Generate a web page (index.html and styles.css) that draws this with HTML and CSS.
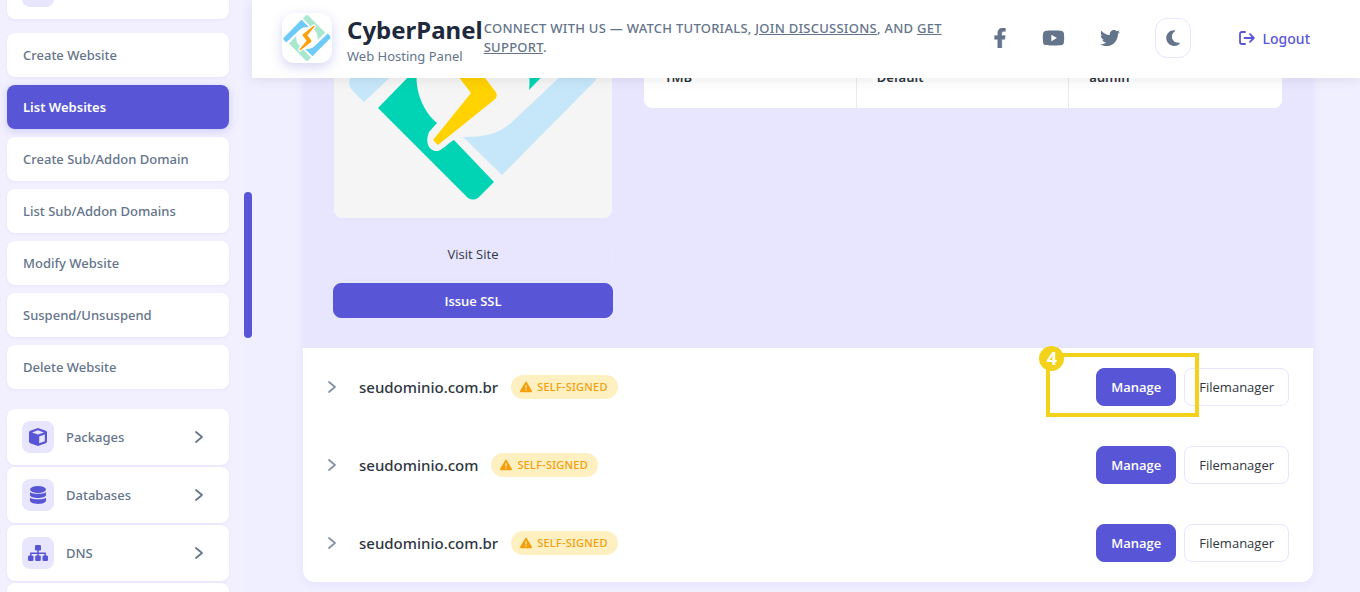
FILE: index.html
```html
<!DOCTYPE html>
<html lang="en">
<head>
    <meta charset="UTF-8">
    <meta name="viewport" content="width=device-width, initial-scale=1.0">
    <title>List Websites - CyberPanel</title>
    <link rel="stylesheet" href="styles.css">
</head>
<body>
    <svg class="sprite" aria-hidden="true">
        <symbol id="logo" viewBox="13 13 252 252">
            <g id="logo-half">
                <path class="logo-green" d="M44 168L83 128C80 152 90 172 103 183L95 192C90 205 97 212 104 211C110 209 114 203 120 200L160 242L144 258Q139 261 134 258Z"/>
                <path class="logo-blue" d="M248 116L260 128Q266 136 260 142L168 235L129 197C152 197 165 194 178 182Z"/>
            </g>
            <use href="#logo-half" transform="rotate(180 139 139)"/>
            <path class="logo-bolt" d="M175 73L180 78L141 125L161 151Q165 156 160 160L104 205L99 200L137 153L117 127Q113 122 119 118Z"/>
        </symbol>
        <symbol id="chevron" viewBox="0 0 10 14">
            <path d="M2 2l6 5-6 5" fill="none" stroke="currentColor" stroke-width="1.700" stroke-linecap="round" stroke-linejoin="round"/>
        </symbol>
        <symbol id="warning" viewBox="0 0 512 512">
            <path fill="currentColor" d="M256 32c14.2 0 27.3 7.5 34.5 19.8l216 368c7.3 12.4 7.3 27.7 .2 40.1S486.3 480 472 480H40c-14.3 0-27.6-7.7-34.7-20.1s-7-27.8 .2-40.1l216-368C228.7 39.5 241.8 32 256 32zm0 128c-13.3 0-24 10.7-24 24V296c0 13.3 10.7 24 24 24s24-10.7 24-24V184c0-13.3-10.7-24-24-24zm32 224a32 32 0 1 0 -64 0 32 32 0 1 0 64 0z"/>
        </symbol>
    </svg>

    <aside class="sidebar">
        <nav class="menu">
            <div class="menu-item"><span class="menu-icon"></span></div>
            <div class="submenu">
                <a href="#" class="submenu-item">Create Website</a>
                <a href="#" class="submenu-item active">List Websites</a>
                <a href="#" class="submenu-item">Create Sub/Addon Domain</a>
                <a href="#" class="submenu-item">List Sub/Addon Domains</a>
                <a href="#" class="submenu-item">Modify Website</a>
                <a href="#" class="submenu-item">Suspend/Unsuspend</a>
                <a href="#" class="submenu-item">Delete Website</a>
            </div>
            <a href="#" class="menu-item">
                <span class="menu-icon">
                    <svg width="20" height="20" viewBox="0 0 20 20"><path fill="currentColor" fill-rule="evenodd" d="M9.300 1.200Q10 1 10.700 1.200L17.800 3.700Q19 4.200 19 5.500V14.500Q19 15.800 17.800 16.300L10.700 18.800Q10 19 9.300 18.800L2.200 16.300Q1 15.800 1 14.500V5.500Q1 4.200 2.200 3.700ZM10 3.300L4 5.400L10 7.600L16 5.400ZM11.200 9.600V16.200L16.800 14.200V7.600Z"/></svg>
                </span>
                <span class="menu-label">Packages</span>
                <svg class="chevron" width="10" height="14"><use href="#chevron"/></svg>
            </a>
            <a href="#" class="menu-item">
                <span class="menu-icon">
                    <svg width="20" height="20" viewBox="0 0 20 20"><g fill="currentColor"><ellipse cx="10" cy="4.500" rx="8" ry="3.500"/><path d="M2 7.200C5 9.300 15 9.300 18 7.200V10C18 14 2 14 2 10Z"/><path d="M2 12.700C5 14.800 15 14.800 18 12.700V15.500C18 20 2 20 2 15.500Z"/></g></svg>
                </span>
                <span class="menu-label">Databases</span>
                <svg class="chevron" width="10" height="14"><use href="#chevron"/></svg>
            </a>
            <a href="#" class="menu-item">
                <span class="menu-icon">
                    <svg width="22" height="20" viewBox="0 0 22 20"><g fill="currentColor"><rect x="8" y="2" width="6" height="5.500" rx="1.300"/><rect x="1" y="12.500" width="5.500" height="5.500" rx="1.300"/><rect x="8.200" y="12.500" width="5.600" height="5.500" rx="1.300"/><rect x="15.500" y="12.500" width="5.500" height="5.500" rx="1.300"/></g><path d="M11 7v6M3.800 13v-2.800h14.400V13" fill="none" stroke="currentColor" stroke-width="1.500"/></svg>
                </span>
                <span class="menu-label">DNS</span>
                <svg class="chevron" width="10" height="14"><use href="#chevron"/></svg>
            </a>
            <div class="menu-item"></div>
        </nav>
        <div class="scroll-track"><div class="scroll-thumb"></div></div>
    </aside>

    <div class="page">
        <header class="header">
            <a href="#" class="brand">
                <span class="brand-logo"><svg class="logo" width="50" height="50" viewBox="0 0 50 50"><use href="#logo" x="1" y="1" width="48" height="48"/></svg></span>
                <span class="brand-text">
                    <span class="brand-name">CyberPanel</span>
                    <span class="brand-tagline">Web Hosting Panel</span>
                </span>
            </a>
            <p class="connect">Connect with us — watch tutorials, <a href="#">join discussions</a>, and <a href="#">get support</a>.</p>
            <div class="social">
                <a href="#" aria-label="Facebook"><svg width="14" height="20" viewBox="0 0 320 512"><path fill="currentColor" d="M279.14 288l14.22-92.66h-88.91v-60.13c0-25.35 12.42-50.06 52.24-50.06h40.42V6.26S260.43 0 225.36 0c-73.22 0-121.08 44.38-121.08 124.72v70.62H22.89V288h81.39v224h100.17V288z" stroke="currentColor" stroke-width="14"/></svg></a>
                <a href="#" aria-label="YouTube"><svg width="23" height="20" viewBox="0 0 576 512"><path fill="currentColor" d="M549.655 124.083c-6.281-23.65-24.787-42.276-48.284-48.597C458.781 64 288 64 288 64S117.22 64 74.629 75.486c-23.497 6.322-42.003 24.947-48.284 48.597-11.412 42.867-11.412 132.305-11.412 132.305s0 89.438 11.412 132.305c6.281 23.65 24.787 41.5 48.284 47.821C117.22 448 288 448 288 448s170.78 0 213.371-11.486c23.497-6.321 42.003-24.171 48.284-47.821 11.412-42.867 11.412-132.305 11.412-132.305s0-89.438-11.412-132.305zm-317.51 213.508V175.185l142.739 81.205-142.739 81.201z"/></svg></a>
                <a href="#" aria-label="Twitter"><svg width="20" height="20" viewBox="0 0 512 512"><path fill="currentColor" d="M459.37 151.716c.325 4.548.325 9.097.325 13.645 0 138.72-105.583 298.558-298.558 298.558-59.452 0-114.68-17.219-161.137-47.106 8.447.974 16.568 1.299 25.34 1.299 49.055 0 94.213-16.568 130.274-44.832-46.132-.975-84.792-31.188-98.112-72.772 6.498.974 12.995 1.624 19.818 1.624 9.421 0 18.843-1.3 27.614-3.573-48.081-9.747-84.143-51.98-84.143-102.985v-1.299c13.969 7.797 30.214 12.67 47.431 13.319-28.264-18.843-46.781-51.005-46.781-87.391 0-19.492 5.197-37.36 14.294-52.954 51.655 63.675 129.3 105.258 216.365 109.807-1.624-7.797-2.599-15.918-2.599-24.04 0-57.828 46.782-104.934 104.934-104.934 30.213 0 57.502 12.67 76.67 33.137 23.715-4.548 46.456-13.32 66.599-25.34-7.798 24.366-24.366 44.833-46.132 57.827 21.117-2.273 41.584-8.122 60.426-16.243-14.292 20.791-32.161 39.308-52.628 54.253z"/></svg></a>
            </div>
            <button type="button" class="theme-toggle" aria-label="Toggle theme"><svg width="14" height="18" viewBox="0 0 384 512"><path fill="currentColor" d="M223.5 32C100 32 0 132.3 0 256S100 480 223.5 480c60.6 0 115.5-24.2 155.8-63.4c5-4.9 6.3-12.5 3.1-18.7s-10.1-9.7-17-8.5c-9.8 1.7-19.8 2.6-30.1 2.6c-96.9 0-175.5-78.8-175.5-176c0-65.8 36-123.1 89.3-153.3c6.1-3.5 9.2-10.5 7.700-17.3s-7.3-11.9-14.3-12.5c-6.3-.5-12.6-.8-19-.8z"/></svg></button>
            <a href="#" class="logout">
                <svg width="16" height="14" viewBox="0 0 16 14"><path d="M6 1H3Q1 1 1 3V11Q1 13 3 13H6M5.500 7H14.500M11 3.200L14.800 7L11 10.800" fill="none" stroke="currentColor" stroke-width="1.800" stroke-linecap="round" stroke-linejoin="round"/></svg>
                Logout
            </a>
        </header>

        <main class="content">
            <section class="site-list">
                <div class="site-details">
                    <div class="preview">
                        <div class="preview-image"><svg class="logo logo-preview" viewBox="0 0 278 278"><use href="#logo" x="13" y="13" width="252" height="252"/></svg></div>
                        <a href="#" class="btn btn-visit">Visit Site</a>
                        <button type="button" class="btn btn-primary btn-ssl">Issue SSL</button>
                    </div>
                    <table class="site-info">
                        <tr>
                            <td>1MB</td>
                            <td>Default</td>
                            <td>admin</td>
                        </tr>
                    </table>
                </div>

                <div class="site-row">
                    <svg class="chevron" width="10" height="14"><use href="#chevron"/></svg>
                    <span class="site-name">seudominio.com.br</span>
                    <span class="badge"><svg width="12" height="12"><use href="#warning"/></svg>Self-Signed</span>
                    <div class="actions">
                        <button type="button" class="btn btn-primary">Manage</button>
                        <button type="button" class="btn">Filemanager</button>
                        <div class="highlight"><span class="highlight-step">4</span></div>
                    </div>
                </div>
                <div class="site-row">
                    <svg class="chevron" width="10" height="14"><use href="#chevron"/></svg>
                    <span class="site-name">seudominio.com</span>
                    <span class="badge"><svg width="12" height="12"><use href="#warning"/></svg>Self-Signed</span>
                    <div class="actions">
                        <button type="button" class="btn btn-primary">Manage</button>
                        <button type="button" class="btn">Filemanager</button>
                    </div>
                </div>
                <div class="site-row">
                    <svg class="chevron" width="10" height="14"><use href="#chevron"/></svg>
                    <span class="site-name">seudominio.com.br</span>
                    <span class="badge"><svg width="12" height="12"><use href="#warning"/></svg>Self-Signed</span>
                    <div class="actions">
                        <button type="button" class="btn btn-primary">Manage</button>
                        <button type="button" class="btn">Filemanager</button>
                    </div>
                </div>
            </section>
        </main>
    </div>
</body>
</html>
```

FILE: styles.css
```css
* {
    box-sizing: border-box;
}
body {
    margin: 0;
    display: flex;
    height: 100vh;
    overflow: hidden;
    background-color: #f0efff;
    color: #2f3640;
    font-family: "Noto Sans", "Open Sans", sans-serif;
    font-size: 14px;
}
a {
    color: inherit;
    text-decoration: none;
}
svg {
    display: block;
    flex: none;
}
.sprite {
    position: absolute;
    width: 0;
    height: 0;
}

/* Logo */
.logo-green {
    fill: var(--logo-green);
}
.logo-blue {
    fill: var(--logo-blue);
}
.logo-bolt {
    fill: var(--logo-bolt);
}
.logo {
    --logo-green: #a8e8d0;
    --logo-blue: #6ecbf8;
    --logo-bolt: #ff9f0a;
}
.logo-preview {
    --logo-green: #00d4b4;
    --logo-blue: #c6e7fa;
    --logo-bolt: #ffd200;
    width: 100%;
}

/* Sidebar */
.sidebar {
    position: relative;
    flex: none;
    width: 252px;
    background-color: #f2f0ff;
    overflow: hidden;
}
.menu {
    display: flex;
    flex-direction: column;
    gap: 2px;
    margin: -37px 23px 0 7px;
}
.menu-item {
    display: flex;
    align-items: center;
    gap: 12px;
    height: 56px;
    padding: 0 25px 0 15px;
    border-radius: 8px;
    background-color: #fff;
    box-shadow: 0 1px 3px rgba(88, 86, 214, 0.08);
    color: #64748b;
    font-size: 13px;
    font-weight: 500;
}
.menu-icon {
    display: flex;
    align-items: center;
    justify-content: center;
    width: 32px;
    height: 32px;
    border-radius: 8px;
    background-color: #e8e6ff;
    color: #5856d6;
}
.menu-label {
    flex: 1;
}
.submenu {
    display: flex;
    flex-direction: column;
    gap: 8px;
    padding: 12px 0 18px;
}
.submenu-item {
    padding: 0 16px;
    border-radius: 8px;
    background-color: #fff;
    box-shadow: 0 1px 3px rgba(88, 86, 214, 0.08);
    color: #64748b;
    font-size: 13px;
    font-weight: 500;
    line-height: 44px;
}
.submenu-item.active {
    background-color: #5856d6;
    box-shadow: 0 2px 8px rgba(88, 86, 214, 0.25);
    color: #fff;
    font-weight: 600;
}
.scroll-track {
    position: absolute;
    top: 0;
    right: 0;
    bottom: 0;
    width: 8px;
    background-color: #f0efff;
}
.scroll-thumb {
    height: 146px;
    margin-top: 192px;
    border-radius: 4px;
    background-color: #5856d6;
}

/* Header */
.page {
    flex: 1;
    min-width: 0;
}
.header {
    position: relative;
    z-index: 10;
    display: flex;
    align-items: center;
    height: 78px;
    padding: 0 30px 2px;
    background-color: #fff;
    box-shadow: 0 2px 12px rgba(0, 0, 0, 0.08);
    color: #64748b;
}
.brand {
    display: flex;
    align-items: center;
    gap: 15px;
}
.brand-logo {
    border-radius: 12px;
    background-color: #fff;
    box-shadow: 0 4px 12px rgba(88, 86, 214, 0.25);
}
.brand-text {
    display: flex;
    flex-direction: column;
    padding-top: 4px;
}
.brand-name {
    color: #1e293b;
    font-size: 24px;
    font-weight: 700;
    line-height: 32px;
}
.brand-tagline {
    font-size: 13px;
    line-height: 20px;
}
.connect {
    flex: 1;
    margin: 0 24px 0 1px;
    font-size: 13px;
    font-weight: 500;
    line-height: 19px;
    letter-spacing: 0.02em;
    text-transform: uppercase;
}
.connect a {
    text-decoration: underline;
}
.social {
    display: flex;
    align-items: center;
    gap: 35px;
}
.theme-toggle {
    display: flex;
    align-items: center;
    justify-content: center;
    width: 36px;
    height: 40px;
    margin: 0 28px 0 35px;
    padding: 0;
    border: 1px solid #e8e6ff;
    border-radius: 12px;
    background-color: #fff;
    color: #64748b;
}
.logout {
    display: flex;
    align-items: center;
    gap: 8px;
    padding: 0 20px;
    color: #5856d6;
    font-weight: 500;
}

/* Website list, scrolled under the header */
.content {
    margin-top: -168px;
    padding: 0 47px 0 51px;
}
.site-list {
    border-radius: 12px;
    background-color: #fff;
    box-shadow: 0 2px 8px rgba(88, 86, 214, 0.08);
}
.site-details {
    display: flex;
    align-items: flex-start;
    gap: 31px;
    padding: 30px 31px 30px 30px;
    background-color: #e8e6ff;
}
.preview {
    display: flex;
    flex-direction: column;
    flex: none;
    width: 280px;
}
.preview-image {
    margin: 0 1px 17px;
    border-radius: 8px;
    background-color: #f5f5f5;
}
.site-info {
    flex: 1;
    width: 100%;
    height: 168px;
    border-collapse: separate;
    border-spacing: 0;
    border-radius: 8px;
    background-color: #fff;
    table-layout: fixed;
}
.site-info td {
    padding: 20px;
    border-right: 1px solid #eceaf0;
    font-size: 13px;
    font-weight: 600;
    line-height: 22px;
    vertical-align: bottom;
}
.site-info td:last-child {
    border-right: 0;
}
.site-row {
    display: flex;
    align-items: center;
    padding: 20px 24px;
}
.site-row .chevron {
    margin-right: 22px;
    color: #8190a5;
}
.menu-item .chevron {
    color: #64748b;
}
.site-name {
    margin-right: 13px;
    font-size: 15px;
    font-weight: 500;
}
.badge {
    display: flex;
    align-items: center;
    gap: 5px;
    padding: 0 10px 0 9px;
    border-radius: 12px;
    background-color: #fff0c2;
    color: #f59e0b;
    font-size: 11px;
    font-weight: 500;
    line-height: 24px;
    letter-spacing: 0.02em;
    text-transform: uppercase;
}
.actions {
    position: relative;
    display: flex;
    gap: 8px;
    margin-left: auto;
}
.btn {
    height: 38px;
    padding: 0 14px;
    border: 1px solid #e8e6ff;
    border-radius: 8px;
    background-color: #fff;
    color: #2f3640;
    font-family: "Open Sans", "Noto Sans", sans-serif;
    font-size: 13px;
    font-weight: 500;
    text-align: center;
}
.btn-primary {
    border-color: #5856d6;
    background-color: #5856d6;
    color: #fff;
    font-weight: 600;
}
.btn-visit {
    margin-bottom: 10px;
    border-color: #eae8ff;
    background-color: transparent;
    line-height: 36px;
}
.btn-ssl {
    height: 35px;
}

/* Step marker around the Manage button */
.highlight {
    position: absolute;
    top: -15px;
    left: -50px;
    width: 153px;
    height: 64px;
    border: 4px solid #f3d21b;
    pointer-events: none;
}
.highlight-step {
    position: absolute;
    top: -11px;
    left: -11px;
    width: 25px;
    height: 25px;
    border-radius: 50%;
    background-color: #f3d21b;
    color: #fff;
    font-size: 18px;
    font-weight: 700;
    line-height: 24px;
    text-align: center;
}
```
